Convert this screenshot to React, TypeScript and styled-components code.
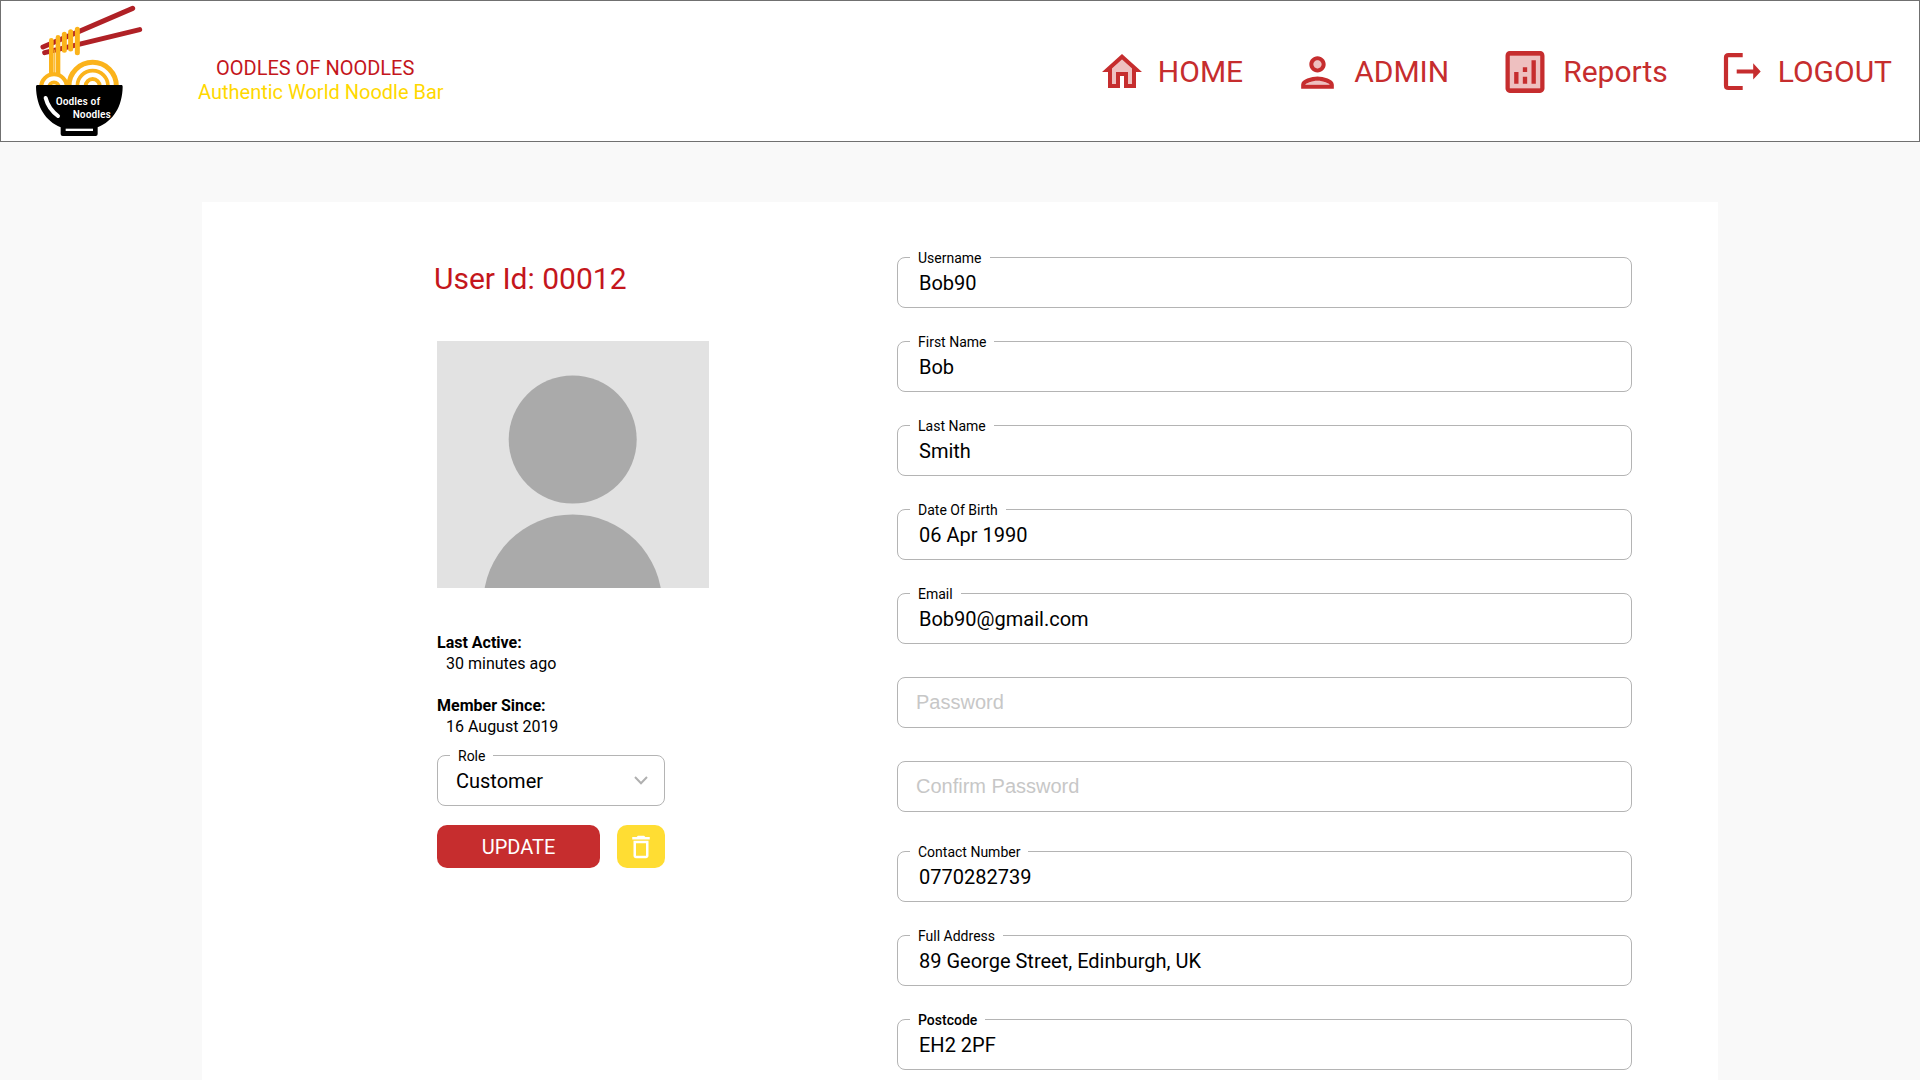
import React, { useState } from "react";
import styled, { createGlobalStyle } from "styled-components";
import { MdDeleteOutline } from "react-icons/md";

const color = {
  red: "#c62d2e",
  brandRed: "#c4161c",
  yellow: "#ffd800",
  button: "#ffdd33",
  line: "#b4b4b4",
  text: "#000000",
  placeholder: "#c7c7c7",
};

const GlobalStyle = createGlobalStyle`
  *, *::before, *::after { box-sizing: border-box; }
  body {
    margin: 0;
    background: #f9f9f9;
    color: ${color.text};
    font-family: Roboto, "Liberation Sans", sans-serif;
  }
`;

const Page = styled.div`
  display: flex;
  flex-direction: column;
  min-height: 100vh;
`;

const Header = styled.header`
  display: flex;
  align-items: center;
  min-height: 142px;
  padding: 0 27px 0 34px;
  border: 1px solid #707070;
  background: #fff;
`;

const Brand = styled.a`
  display: flex;
  align-items: center;
  gap: 55px;
  text-decoration: none;
`;

const BrandText = styled.span`
  display: flex;
  flex-direction: column;
  padding-top: 18px;
  font-size: 20px;
  line-height: 24px;
`;

const BrandName = styled.span`
  padding-left: 18px;
  color: ${color.brandRed};
`;

const BrandTagline = styled.span`
  color: ${color.yellow};
`;

const Nav = styled.nav`
  display: flex;
  align-items: center;
  gap: 50px;
  margin-left: auto;
  padding-top: 2px;
`;

const NavLink = styled.a`
  display: flex;
  align-items: center;
  gap: 12px;
  color: ${color.red};
  font-size: 30px;
  line-height: 36px;
  text-decoration: none;
`;

const Card = styled.main`
  display: grid;
  grid-template-columns: 272px minmax(0, 1fr);
  align-items: start;
  column-gap: 188px;
  flex: 1;
  margin: 60px 202px 0;
  padding: 55px 86px 10px 235px;
  background: #fff;
`;

const Profile = styled.section`
  display: flex;
  flex-direction: column;
`;

const UserId = styled.h1`
  margin: 0 0 40px -3px;
  color: ${color.brandRed};
  font-size: 30px;
  font-weight: 400;
  line-height: 44px;
`;

const Facts = styled.dl`
  display: flex;
  flex-direction: column;
  gap: 21px;
  margin: 44px 0 18px;
  font-size: 16px;
  line-height: 21px;
`;

const FactName = styled.dt`
  font-weight: 700;
`;

const FactValue = styled.dd`
  margin: 0 0 0 9px;
`;

const Controls = styled.div`
  display: flex;
  flex-direction: column;
  gap: 19px;
  width: 228px;
`;

const Actions = styled.div`
  display: flex;
  gap: 17px;
`;

const Button = styled.button<{ $tone: "primary" | "warning" }>`
  display: flex;
  align-items: center;
  justify-content: center;
  flex: ${(p) => (p.$tone === "primary" ? "1" : "0 0 48px")};
  height: 43px;
  padding: 0;
  border: 0;
  border-radius: 10px;
  background: ${(p) => (p.$tone === "primary" ? color.red : color.button)};
  color: #fff;
  font: 400 20px/24px Roboto, "Liberation Sans", sans-serif;
  cursor: pointer;
`;

const Fields = styled.form`
  display: flex;
  flex-direction: column;
  gap: 39px;
`;

const FieldGroup = styled.div`
  display: flex;
  flex-direction: column;
  gap: 33px;
`;

const FieldBox = styled.div`
  position: relative;
  display: flex;
  align-items: center;
`;

const FieldLabel = styled.label<{ $strong?: boolean }>`
  position: absolute;
  top: -8px;
  left: 13px;
  padding: 0 8px;
  background: #fff;
  font-size: 14px;
  font-weight: ${(p) => (p.$strong ? 500 : 400)};
  line-height: 18px;
`;

const Input = styled.input`
  width: 100%;
  height: 51px;
  padding: 0 21px;
  border: 1px solid ${color.line};
  border-radius: 8px;
  background: transparent;
  color: ${color.text};
  font: 400 20px/24px Roboto, "Liberation Sans", sans-serif;

  &:placeholder-shown {
    padding-left: 18px;
    font-family: "Liberation Sans", Arial, sans-serif;
  }

  &::placeholder {
    color: ${color.placeholder};
    opacity: 1;
  }
`;

const Select = styled.select`
  width: 100%;
  height: 51px;
  padding: 0 40px 0 18px;
  border: 1px solid ${color.line};
  border-radius: 8px;
  background: transparent;
  color: ${color.text};
  font: 400 20px/24px Roboto, "Liberation Sans", sans-serif;
  appearance: none;
`;

const Chevron = styled.svg`
  position: absolute;
  right: 17px;
  pointer-events: none;
`;

const LogoText = styled.text`
  fill: #fff;
  font-family: "Roboto Condensed", "Liberation Sans Narrow", Roboto, sans-serif;
  font-size: 35px;
  font-weight: 500;
`;

function Logo() {
  return (
    <svg width="108" height="132" viewBox="105 15 324 396" aria-hidden="true">
      <defs>
        <clipPath id="above-bowl">
          <rect x="100" y="0" width="340" height="257" />
        </clipPath>
      </defs>
      <g stroke="#b02126" strokeWidth="15" strokeLinecap="round">
        <path d="M129 141 L398 25" />
        <path d="M134 158 L419 89" />
      </g>
      <g stroke="#fbb31b" strokeLinecap="round" fill="none">
        <path d="M154 121 V232 M174 112 V232" strokeWidth="14" />
        <path d="M164 150 V232" strokeWidth="3" />
        <path d="M193 103 V151 M212 95 V147 M232 88 V158" strokeWidth="15" />
      </g>
      <g clipPath="url(#above-bowl)" stroke="#fbb31b" fill="#fff">
        <circle cx="278" cy="258" r="71" strokeWidth="15" />
        <circle cx="278" cy="258" r="46" strokeWidth="11" />
        <circle cx="278" cy="258" r="21" strokeWidth="12" />
        <circle cx="162" cy="262" r="39" strokeWidth="12" />
        <circle cx="162" cy="262" r="15" strokeWidth="11" />
      </g>
      <path d="M111 255 H365 Q368 255 368 260 C367 320 340 362 293 382 V402 Q293 408 287 408 H188 Q182 408 182 402 V382 C136 362 109 320 108 260 Q108 255 111 255 Z" fill="#000" />
      <rect x="197" y="386" width="82" height="7" fill="#fff" />
      <path d="M137 294 Q145 326 174 348" stroke="#fff" strokeWidth="12" strokeLinecap="round" fill="none" />
      <LogoText x="167" y="314">Oodles of</LogoText>
      <LogoText x="218" y="354">Noodles</LogoText>
    </svg>
  );
}

function HomeIcon() {
  return (
    <svg width="48" height="48" viewBox="0 0 24 24" fill="currentColor" aria-hidden="true">
      <path d="M7 10.19V18h2v-6h6v6h2v-7.81l-5-4.5z" opacity=".3" />
      <path d="M12 3L2 12h3v8h6v-6h2v6h6v-8h3L12 3zm5 15h-2v-6H9v6H7v-7.81l5-4.5 5 4.5V18z" />
    </svg>
  );
}

function PersonIcon() {
  return (
    <svg width="49" height="49" viewBox="0 0 24 24" fill="currentColor" aria-hidden="true">
      <path d="M12 16c-2.7 0-5.8 1.27-6 1.99V18h12c-.2-.71-3.3-2-6-2z" opacity=".3" />
      <circle cx="12" cy="8" r="2" opacity=".3" />
      <path d="M12 12c2.21 0 4-1.79 4-4s-1.79-4-4-4-4 1.79-4 4 1.79 4 4 4zm0-6c1.1 0 2 .9 2 2s-.9 2-2 2-2-.9-2-2 .9-2 2-2zm0 8c-2.67 0-8 1.34-8 4v2h16v-2c0-2.66-5.33-4-8-4zm6 4H6v-.01c.2-.72 3.3-1.99 6-1.99s5.8 1.29 6 2z" />
    </svg>
  );
}

function ReportsIcon() {
  return (
    <svg width="52" height="56" viewBox="0 0 24 24" preserveAspectRatio="none" fill="currentColor" aria-hidden="true">
      <path d="M5 5h14v14H5z" opacity=".3" />
      <path d="M19 3H5c-1.1 0-2 .9-2 2v14c0 1.1.9 2 2 2h14c1.1 0 2-.9 2-2V5c0-1.1-.9-2-2-2zm0 16H5V5h14v14z" />
      <path d="M7 12h2v5H7zM15 7h2v10h-2zM11 14h2v3h-2zM11 10h2v2h-2z" />
    </svg>
  );
}

function LogoutIcon() {
  return (
    <svg width="48" height="48" viewBox="-6 -5 48 48" aria-hidden="true">
      <path d="M18.7 2.1 H4.5 Q2 2.1 2 4.6 V32.5 Q2 35 4.5 35 H18.7" fill="none" stroke="currentColor" strokeWidth="4.2" />
      <path d="M12.7 16.4 H29.2 V10.3 L36.7 18.4 L29.2 26.4 V20.6 H12.7 Z" fill="currentColor" />
    </svg>
  );
}

function Portrait() {
  return (
    <svg width="272" height="247" viewBox="0 0 272 247" role="img" aria-label="User portrait">
      <rect width="272" height="247" fill="#e2e2e2" />
      <circle cx="135.7" cy="98.5" r="64" fill="#aaaaaa" />
      <circle cx="135.7" cy="262.8" r="89.4" fill="#aaaaaa" />
    </svg>
  );
}

type FieldSpec = {
  id: string;
  label: string;
  value?: string;
  type?: string;
  strong?: boolean;
};

const accountFields: FieldSpec[] = [
  { id: "username", label: "Username", value: "Bob90" },
  { id: "first-name", label: "First Name", value: "Bob" },
  { id: "last-name", label: "Last Name", value: "Smith" },
  { id: "birth-date", label: "Date Of Birth", value: "06 Apr 1990" },
  { id: "email", label: "Email", value: "Bob90@gmail.com", type: "email" },
  { id: "password", label: "Password", type: "password" },
  { id: "confirm-password", label: "Confirm Password", type: "password" },
];

const contactFields: FieldSpec[] = [
  { id: "contact-number", label: "Contact Number", value: "0770282739", type: "tel" },
  { id: "address", label: "Full Address", value: "89 George Street, Edinburgh, UK" },
  { id: "postcode", label: "Postcode", value: "EH2 2PF", strong: true },
];

function Field({ id, label, value, type = "text", strong }: FieldSpec) {
  const outlined = value !== undefined;
  return (
    <FieldBox>
      <Input
        id={id}
        type={type}
        defaultValue={value}
        placeholder={outlined ? undefined : label}
        aria-label={outlined ? undefined : label}
      />
      {outlined && (
        <FieldLabel htmlFor={id} $strong={strong}>
          {label}
        </FieldLabel>
      )}
    </FieldBox>
  );
}

export default function App() {
  const [role, setRole] = useState("Customer");

  return (
    <Page>
      <GlobalStyle />
      <Header>
        <Brand href="#home">
          <Logo />
          <BrandText>
            <BrandName>OODLES OF NOODLES</BrandName>
            <BrandTagline>Authentic World Noodle Bar</BrandTagline>
          </BrandText>
        </Brand>
        <Nav>
          <NavLink href="#home"><HomeIcon />HOME</NavLink>
          <NavLink href="#admin"><PersonIcon />ADMIN</NavLink>
          <NavLink href="#reports"><ReportsIcon />Reports</NavLink>
          <NavLink href="#logout"><LogoutIcon />LOGOUT</NavLink>
        </Nav>
      </Header>
      <Card>
        <Profile>
          <UserId>User Id: 00012</UserId>
          <Portrait />
          <Facts>
            <div>
              <FactName>Last Active:</FactName>
              <FactValue>30 minutes ago</FactValue>
            </div>
            <div>
              <FactName>Member Since:</FactName>
              <FactValue>16 August 2019</FactValue>
            </div>
          </Facts>
          <Controls>
            <FieldBox>
              <Select id="role" value={role} onChange={(e) => setRole(e.target.value)}>
                <option>Customer</option>
                <option>Admin</option>
              </Select>
              <FieldLabel htmlFor="role">Role</FieldLabel>
              <Chevron width="14" height="9" viewBox="0 0 14 9" aria-hidden="true">
                <path d="M1 1 L7 7.2 L13 1" fill="none" stroke="#b0b0b0" strokeWidth="2" />
              </Chevron>
            </FieldBox>
            <Actions>
              <Button type="submit" form="user-form" $tone="primary">UPDATE</Button>
              <Button type="button" $tone="warning" aria-label="Delete user">
                <MdDeleteOutline size={30} />
              </Button>
            </Actions>
          </Controls>
        </Profile>
        <Fields id="user-form" onSubmit={(e) => e.preventDefault()}>
          <FieldGroup>
            {accountFields.map((field) => <Field key={field.id} {...field} />)}
          </FieldGroup>
          <FieldGroup>
            {contactFields.map((field) => <Field key={field.id} {...field} />)}
          </FieldGroup>
        </Fields>
      </Card>
    </Page>
  );
}
